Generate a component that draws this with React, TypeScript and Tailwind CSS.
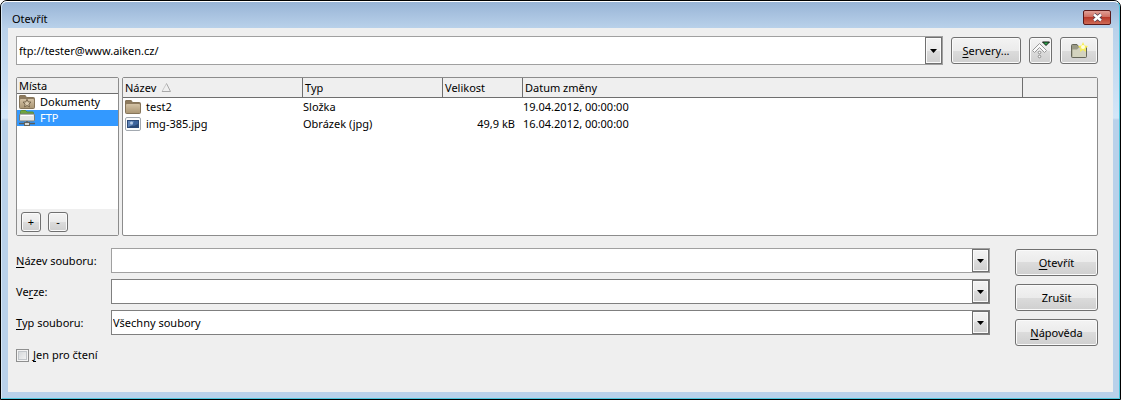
import React, { useState } from "react";

type Entry = {
  name: string;
  kind: string;
  size: string;
  date: string;
  icon: "folder" | "image";
};

const entries: Entry[] = [
  { name: "test2", kind: "Složka", size: "", date: "19.04.2012, 00:00:00", icon: "folder" },
  { name: "img-385.jpg", kind: "Obrázek (jpg)", size: "49,9 kB", date: "16.04.2012, 00:00:00", icon: "image" },
];

const places = ["Dokumenty", "FTP"];

const buttonLook =
  "rounded-[3px] border border-[#707070] bg-[linear-gradient(#f3f3f3_0%,#ebebeb_50%,#dcdcdc_50%,#cfcfcf_100%)] shadow-[inset_0_0_0_1px_#fafafa]";

const FolderIcon = () => (
  <svg width="16" height="16" viewBox="0 0 16 16" className="shrink-0" aria-hidden="true">
    <path d="M.5 3V2q0-.5.5-.5h5q.5 0 .7.5l.5 1.5h7.3q1 0 1 1v9q0 1-1 1h-13q-1 0-1-1z" fill="#8d7a5e" stroke="#86755a" />
    <path d="M1 6q0-1 1-1h12q1 0 1 1v7.5q0 .5-.5.5h-13q-.5 0-.5-.5z" fill="url(#tan)" />
  </svg>
);

const StarFolderIcon = () => (
  <svg width="16" height="16" viewBox="0 0 16 16" className="shrink-0" aria-hidden="true">
    <path d="M.5 3V2q0-.5.5-.5h5q.5 0 .7.5l.5 1.5h7.3q1 0 1 1v9q0 1-1 1h-13q-1 0-1-1z" fill="#8d7a5e" stroke="#86755a" />
    <path d="M1 6q0-1 1-1h12q1 0 1 1v7.5q0 .5-.5.5h-13q-.5 0-.5-.5z" fill="url(#tan)" />
    <path d="M8 5.3l1.2 2.6 2.8.3-2.1 1.9.6 2.8L8 11.5l-2.5 1.4.6-2.8L4 8.200l2.8-.3z" fill="#d9c9ad" stroke="#6d5d45" strokeWidth=".9" />
  </svg>
);

const ServerIcon = () => (
  <svg width="16" height="16" viewBox="0 0 16 16" className="shrink-0" aria-hidden="true">
    <path d="M1.5 5V1.5q0-1 1-1h4L8 2h5.5q1 0 1 1v2z" fill="#6ea53f" stroke="#5b8f37" />
    <path d="M.5 5q0-1 1-1h13q1 0 1 1v5q0 1-1 1h-13q-1 0-1-1z" fill="#e4e6e4" stroke="#777b78" />
    <path d="M2 5.5h12" stroke="#fff" />
    <path d="M8 11v2M0 13.5h16" stroke="#595c5a" strokeWidth="1.5" />
    <rect x="5.5" y="12.5" width="5" height="3" fill="#d6d8d6" stroke="#60635f" />
  </svg>
);

const ImageIcon = () => (
  <svg width="16" height="16" viewBox="0 0 16 16" className="shrink-0" aria-hidden="true">
    <rect x=".5" y="1.5" width="15" height="13" rx="1.5" fill="#fbfbfb" stroke="#a3a9b0" />
    <rect x="2.5" y="4.5" width="11" height="7" fill="#3d649c" stroke="#2c4a78" />
    <path d="M3 5h6l-2 6H3z" fill="#5f84b8" />
    <circle cx="6.5" cy="7" r="1.5" fill="#b9cde8" />
    <path d="M3 11l4-1.500 2 .5 4-2v3z" fill="#2a4875" />
  </svg>
);

const LevelUpIcon = () => (
  <svg width="20" height="20" viewBox="0 0 20 20" className="shrink-0" aria-hidden="true">
    <path d="M1.5 9.5l7-7 7 7-2 2-5-5-5 5z" fill="#fafafa" stroke="#989898" />
    <circle cx="8.5" cy="11.5" r="1.300" fill="#fafafa" stroke="#8d8d8d" />
    <circle cx="8.5" cy="15.5" r="1.300" fill="#fafafa" stroke="#8d8d8d" />
    <path d="M11.5 1h7L15 4.500z" fill="#2aa84a" stroke="#111" />
  </svg>
);

const NewFolderIcon = () => (
  <svg width="18" height="18" viewBox="0 0 18 18" className="shrink-0" aria-hidden="true">
    <path d="M1.5 3.5q0-1 1-1H7l1.500 2h7q1 0 1 1v9q0 1-1 1h-13q-1 0-1-1z" fill="#9a9a86" stroke="#66675a" />
    <path d="M2.500 7.500h4.500l2-2h7V15H2.500z" fill="#d3d3bf" />
    <path d="M13 0l1.500 3.500 3.500.5-2.500 2.500.5 3.500-3-2-3 2 .5-3.500L8 4l3.500-.5z" fill="#f7ee55" />
    <circle cx="13" cy="5" r="2" fill="#fffde0" />
  </svg>
);

const Arrow = () => (
  <svg width="7" height="4" viewBox="0 0 7 4" aria-hidden="true">
    <path d="M0 0h7L3.5 4z" fill="#000" />
  </svg>
);

const arrowBox =
  "flex w-[17px] shrink-0 items-center justify-center border border-[#707070] bg-[linear-gradient(#f3f3f3_0%,#ebebeb_50%,#dcdcdc_50%,#cfcfcf_100%)] shadow-[inset_0_0_0_1px_#fafafa]";

const Key = ({ children }: { children: string }) => (
  <u className="underline underline-offset-2">{children}</u>
);

const App: React.FC = () => {
  const [url, setUrl] = useState("ftp://tester@www.aiken.cz/");
  const [fileName, setFileName] = useState("");
  const [place, setPlace] = useState("FTP");
  const [readOnly, setReadOnly] = useState(false);

  return (
    <div className="flex min-h-screen flex-col rounded-t-[7px] border border-black bg-[#b9d1ea] font-['Noto_Sans','Open_Sans',sans-serif] text-[11px] leading-4 text-black">
      <svg width="0" height="0" className="absolute" aria-hidden="true">
        <linearGradient id="tan" x1="0" y1="0" x2="0" y2="1">
          <stop offset="0" stopColor="#d3c2a5" />
          <stop offset="1" stopColor="#ab9775" />
        </linearGradient>
      </svg>

      <div className="flex grow flex-col rounded-t-[6px] border border-[#4fc6dd] border-t-white border-l-[#d8e8f6] bg-[linear-gradient(#98b4d6_0px,#b9d1ea_26px,#d3e6f8_116px,#b9d1ea_118px)] px-[6px] pb-[6px]">
        <header className="flex h-[26px] items-center justify-between pt-2 pl-1">
          <h1>Otevřít</h1>
          <button
            type="button"
            aria-label="Zavřít"
            className="mr-[2px] mb-1 flex h-[15px] w-7 items-center justify-center rounded-[2px] border border-[#5b1a1a] bg-[linear-gradient(#e0a097_0%,#cf6a5c_50%,#b83a2b_50%,#cf6a55_100%)]"
          >
            <svg width="11" height="9" viewBox="0 0 11 9" aria-hidden="true">
              <path d="M2 1.500l7 6M9 1.500l-7 6" stroke="#4d3a4a" strokeWidth="4" />
              <path d="M2 1.500l7 6M9 1.500l-7 6" stroke="#fff" strokeWidth="2.500" />
            </svg>
          </button>
        </header>

        <main className="grow bg-[#efefef] pt-2 pr-[15px] pl-2">
          <div className="flex items-center gap-2">
            <div className="flex h-[29px] grow border border-[#a0a0a0] bg-white">
              <input
                aria-label="Cesta"
                value={url}
                onChange={(e) => setUrl(e.target.value)}
                className="min-w-0 grow px-[2px] outline-none"
              />
              <button type="button" aria-label="Předchozí cesty" className={arrowBox}>
                <Arrow />
              </button>
            </div>
            <button type="button" className={`h-[27px] w-[70px] ${buttonLook}`}>
              <Key>S</Key>ervery...
            </button>
            <button type="button" aria-label="O úroveň výš" className={`flex h-[27px] w-[23px] items-center justify-center ${buttonLook}`}>
              <LevelUpIcon />
            </button>
            <button type="button" aria-label="Nová složka" className={`flex h-[27px] w-[38px] items-center justify-center ${buttonLook}`}>
              <NewFolderIcon />
            </button>
          </div>

          <div className="mt-3 flex h-[159px] gap-[3px]">
            <section className="flex w-[103px] shrink-0 flex-col rounded-[2px] border border-[#8c8c8c] bg-white">
              <h2 className="flex h-4 items-center border-b border-[#6e6e6e] bg-[#efefef] px-[2px]">Místa</h2>
              <ul className="grow">
                {places.map((p) => (
                  <li key={p}>
                    <button
                      type="button"
                      onClick={() => setPlace(p)}
                      className={`flex w-full items-center gap-[5px] px-[2px] text-left ${
                        p === place ? "bg-[#3399ff] text-white" : ""
                      }`}
                    >
                      {p === "FTP" ? <ServerIcon /> : <StarFolderIcon />}
                      {p}
                    </button>
                  </li>
                ))}
              </ul>
              <div className="flex gap-[7px] bg-[#efefef] px-1 py-[3px]">
                <button type="button" aria-label="Přidat místo" className={`size-5 ${buttonLook}`}>
                  +
                </button>
                <button type="button" aria-label="Odebrat místo" className={`size-5 ${buttonLook}`}>
                  -
                </button>
              </div>
            </section>

            <section className="min-w-0 grow rounded-[2px] border border-[#8c8c8c] bg-white">
              <table className="w-full table-fixed border-separate border-spacing-0">
                <colgroup>
                  <col className="w-[180px]" />
                  <col className="w-[140px]" />
                  <col className="w-[80px]" />
                  <col className="w-[500px]" />
                  <col />
                </colgroup>
                <thead>
                  <tr className="h-5 bg-[#efefef] text-left">
                    <th className="border-r border-b border-[#6e6e6e] px-[2px] font-normal" aria-sort="ascending">
                      <span className="flex items-center gap-[5px]">
                        Název
                        <svg width="10" height="9" viewBox="0 0 10 9" aria-hidden="true">
                          <path d="M5.500.5L1 8.500" stroke="#c8c8c8" />
                          <path d="M5.500.5L9.500 8.500H1" stroke="#a8a8a8" fill="none" />
                        </svg>
                      </span>
                    </th>
                    <th className="border-r border-b border-[#6e6e6e] px-[2px] font-normal">Typ</th>
                    <th className="border-r border-b border-[#6e6e6e] px-[2px] font-normal">Velikost</th>
                    <th className="border-r border-b border-[#6e6e6e] px-[2px] font-normal">Datum změny</th>
                    <td className="border-b border-[#6e6e6e]" />
                  </tr>
                </thead>
                <tbody>
                  {entries.map((entry) => (
                    <tr key={entry.name} className="h-[17px] whitespace-nowrap">
                      <td className="pl-[2px]">
                        <span className="flex items-center gap-[5px]">
                          {entry.icon === "folder" ? <FolderIcon /> : <ImageIcon />}
                          {entry.name}
                        </span>
                      </td>
                      <td>{entry.kind}</td>
                      <td className="pr-2 text-right">{entry.size}</td>
                      <td>{entry.date}</td>
                      <td />
                    </tr>
                  ))}
                </tbody>
              </table>
            </section>
          </div>

          <form className="mt-3 flex gap-[25px]" onSubmit={(e) => e.preventDefault()}>
            <div className="grid grow grid-cols-[95px_1fr] content-start items-center gap-y-[6px]">
              <label htmlFor="file-name">
                <Key>N</Key>ázev souboru:
              </label>
              <div className="flex h-[25px] border border-[#a0a0a0] bg-white">
                <input
                  id="file-name"
                  value={fileName}
                  onChange={(e) => setFileName(e.target.value)}
                  className="min-w-0 grow px-[2px] outline-none"
                />
                <button type="button" aria-label="Předchozí názvy" className={arrowBox}>
                  <Arrow />
                </button>
              </div>

              <label htmlFor="version">
                Ve<Key>r</Key>ze:
              </label>
              <div className="relative flex h-[25px] border border-[#7f7f7f] bg-white">
                <select id="version" className="grow appearance-none px-[2px] outline-none" />
                <span className={`pointer-events-none absolute inset-y-0 right-0 ${arrowBox}`}>
                  <Arrow />
                </span>
              </div>

              <label htmlFor="file-type">
                <Key>T</Key>yp souboru:
              </label>
              <div className="relative flex h-[25px] border border-[#7f7f7f] bg-white">
                <select id="file-type" className="grow appearance-none px-px outline-none">
                  <option>Všechny soubory</option>
                </select>
                <span className={`pointer-events-none absolute inset-y-0 right-0 ${arrowBox}`}>
                  <Arrow />
                </span>
              </div>

              <label className="col-span-2 mt-[6px] flex items-center gap-1">
                <input
                  type="checkbox"
                  checked={readOnly}
                  onChange={(e) => setReadOnly(e.target.checked)}
                  className="size-[13px] appearance-none border border-[#8e8f8f] bg-[linear-gradient(135deg,#cfd3d6,#f8f8f8)] shadow-[inset_0_0_0_1px_#f4f4f4,inset_0_0_0_2px_#c2c6ca] checked:bg-[#4b6a96] checked:bg-none"
                />
                <span>
                  <Key>J</Key>en pro čtení
                </span>
              </label>
            </div>

            <div className="flex w-[83px] flex-col gap-2 pt-px">
              <button type="submit" className={`h-[27px] ${buttonLook}`}>
                <Key>O</Key>tevřít
              </button>
              <button type="button" className={`h-[27px] ${buttonLook}`}>
                Zrušit
              </button>
              <button type="button" className={`h-[27px] ${buttonLook}`}>
                <Key>N</Key>ápověda
              </button>
            </div>
          </form>
        </main>
      </div>
    </div>
  );
};

export default App;
